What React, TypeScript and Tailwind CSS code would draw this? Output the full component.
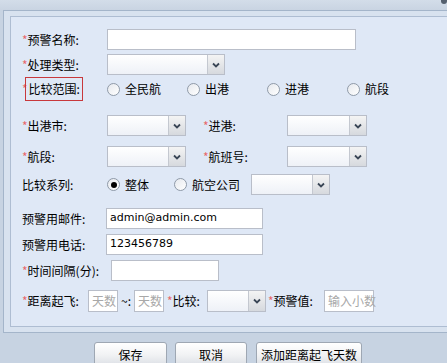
// Alert rule form - recreated from a legacy ExtJS style dialog
const font = { fontFamily: '"Noto Sans CJK SC", "Noto Sans", sans-serif' }

function Star() {
  return <span className="text-[#e8676b]">*</span>
}

function TextBox({ w, value, placeholder }: { w: string; value?: string; placeholder?: string }) {
  return (
    <div className={`${w} flex h-full items-center border border-[#b9bec9] bg-white px-[3px]`}>
      {value ? (
        <span className="text-[11px] text-black" style={{ fontFamily: '"DejaVu Sans", sans-serif' }}>
          {value}
        </span>
      ) : (
        <span className="whitespace-nowrap text-[12px] text-[#a8a8a8]">{placeholder}</span>
      )}
    </div>
  )
}

function Combo({ w }: { w: string }) {
  return (
    <div className={`${w} flex h-full border border-[#b9bec9] bg-gradient-to-b from-white to-[#eef1f7]`}>
      <div className="flex-1" />
      <div className="flex w-[17px] items-center justify-center border-l border-[#c4c8d0] bg-gradient-to-b from-[#f4f4f4] to-[#d6d9de]">
        <svg width="8" height="6" viewBox="0 0 8 6">
          <path d="M1 1.5 L4 4.5 L7 1.5" fill="none" stroke="#3a4656" strokeWidth="1.8" />
        </svg>
      </div>
    </div>
  )
}

function Radio({ checked, label, w }: { checked?: boolean; label: string; w?: string }) {
  return (
    <div className={`flex items-center gap-[5px] ${w ?? ''}`}>
      <span className="flex h-[13px] w-[13px] items-center justify-center rounded-full border border-[#8f9aa8] bg-gradient-to-br from-[#e6e9ee] to-white">
        {checked && <span className="h-[6px] w-[6px] rounded-full bg-black" />}
      </span>
      <span className="text-[12px] text-black">{label}</span>
    </div>
  )
}

function Btn({ children, w }: { children: string; w: string }) {
  return (
    <div className={`${w} flex h-[26px] justify-center rounded-[3px] border border-[#9ea7b3] bg-gradient-to-b from-white via-[#f1f2f4] to-[#d9dde3] pt-[3px] text-[12px] text-black`}>
      {children}
    </div>
  )
}

export default function App() {
  return (
    <div className="relative h-[363px] w-[447px] overflow-hidden bg-[#c7d3e2]" style={font}>
      {/* top strip */}
      <div className="h-[10px] bg-gradient-to-b from-[#d3dde9] to-[#c9d4e2]" />
      <span className="absolute right-[0px] top-[-3px] h-[7px] w-[6px] rounded-full bg-[#55606e]" />

      {/* outer panel */}
      <div className="ml-[3px] h-[323px] border-l border-t border-b border-[#a4b5ca] bg-[#d8e2ef] pl-[6px] pt-[5px]">
        {/* inner box */}
        <div className="h-[311px] border-l border-t border-b border-[#aebdd2] bg-[#dfe8f6] pl-[11px] pt-[12px]">
          {/* row 1 */}
          <div className="flex h-[21px] items-center text-[12px]">
            <div className="w-[85px]">
              <Star />预警名称:
            </div>
            <TextBox w="w-[249px]" />
          </div>

          {/* row 2 */}
          <div className="mt-[4px] flex h-[21px] items-center text-[12px]">
            <div className="w-[85px]">
              <Star />处理类型:
            </div>
            <Combo w="w-[118px]" />
          </div>

          {/* row 3 */}
          <div className="mt-[2px] flex h-[24px] items-center text-[12px]">
            <div className="flex w-[85px] items-center">
              <Star />
              <span className="ml-[-3px] flex h-[24px] items-center border border-[#c8383c] pl-[3px] pr-[2px]">比较范围:</span>
            </div>
            <Radio label="全民航" w="w-[80px]" />
            <Radio label="出港" w="w-[80px]" />
            <Radio label="进港" w="w-[80px]" />
            <Radio label="航段" />
          </div>

          {/* row 4 */}
          <div className="mt-[14px] flex h-[21px] items-center text-[12px]">
            <div className="w-[85px]">
              <Star />出港市:
            </div>
            <Combo w="w-[79px]" />
            <div className="ml-[17px] w-[84px]">
              <Star />进港:
            </div>
            <Combo w="w-[80px]" />
          </div>

          {/* row 5 */}
          <div className="mt-[10px] flex h-[21px] items-center text-[12px]">
            <div className="w-[85px]">
              <Star />航段:
            </div>
            <Combo w="w-[79px]" />
            <div className="ml-[17px] w-[84px]">
              <Star />航班号:
            </div>
            <Combo w="w-[80px]" />
          </div>

          {/* row 6 */}
          <div className="mt-[7px] flex h-[21px] items-center text-[12px]">
            <div className="w-[85px]">比较系列:</div>
            <Radio checked label="整体" w="w-[67px]" />
            <Radio label="航空公司" w="w-[77px]" />
            <Combo w="w-[79px]" />
          </div>

          {/* row 7 */}
          <div className="mt-[13px] flex h-[21px] items-center text-[12px]">
            <div className="w-[84px]">预警用邮件:</div>
            <TextBox w="w-[157px]" value="admin@admin.com" />
          </div>

          {/* row 8 */}
          <div className="mt-[5px] flex h-[21px] items-center text-[12px]">
            <div className="w-[84px]">预警用电话:</div>
            <TextBox w="w-[157px]" value="123456789" />
          </div>

          {/* row 9 */}
          <div className="mt-[5px] flex h-[21px] items-center text-[12px]">
            <div className="w-[89px]">
              <Star />时间间隔(分):
            </div>
            <TextBox w="w-[108px]" />
          </div>

          {/* row 10 */}
          <div className="mt-[9px] flex h-[22px] items-center whitespace-nowrap text-[12px]">
            <div className="w-[66px]">
              <Star />距离起飞:
            </div>
            <TextBox w="w-[30px]" placeholder="天数" />
            <span className="w-[16px] pl-[3px]">~:</span>
            <TextBox w="w-[30px]" placeholder="天数" />
            <div className="ml-[3px] w-[40px]">
              <Star />比较:
            </div>
            <Combo w="w-[59px]" />
            <div className="ml-[2px] w-[56px]">
              <Star />预警值:
            </div>
            <TextBox w="w-[50px]" placeholder="输入小数" />
          </div>
        </div>
      </div>

      {/* buttons */}
      <div className="mt-[9px] flex pl-[94px]">
        <Btn w="w-[73px]">保存</Btn>
        <div className="ml-[8px]">
          <Btn w="w-[72px]">取消</Btn>
        </div>
        <div className="ml-[9px]">
          <Btn w="w-[106px]">添加距离起飞天数</Btn>
        </div>
      </div>
    </div>
  )
}
